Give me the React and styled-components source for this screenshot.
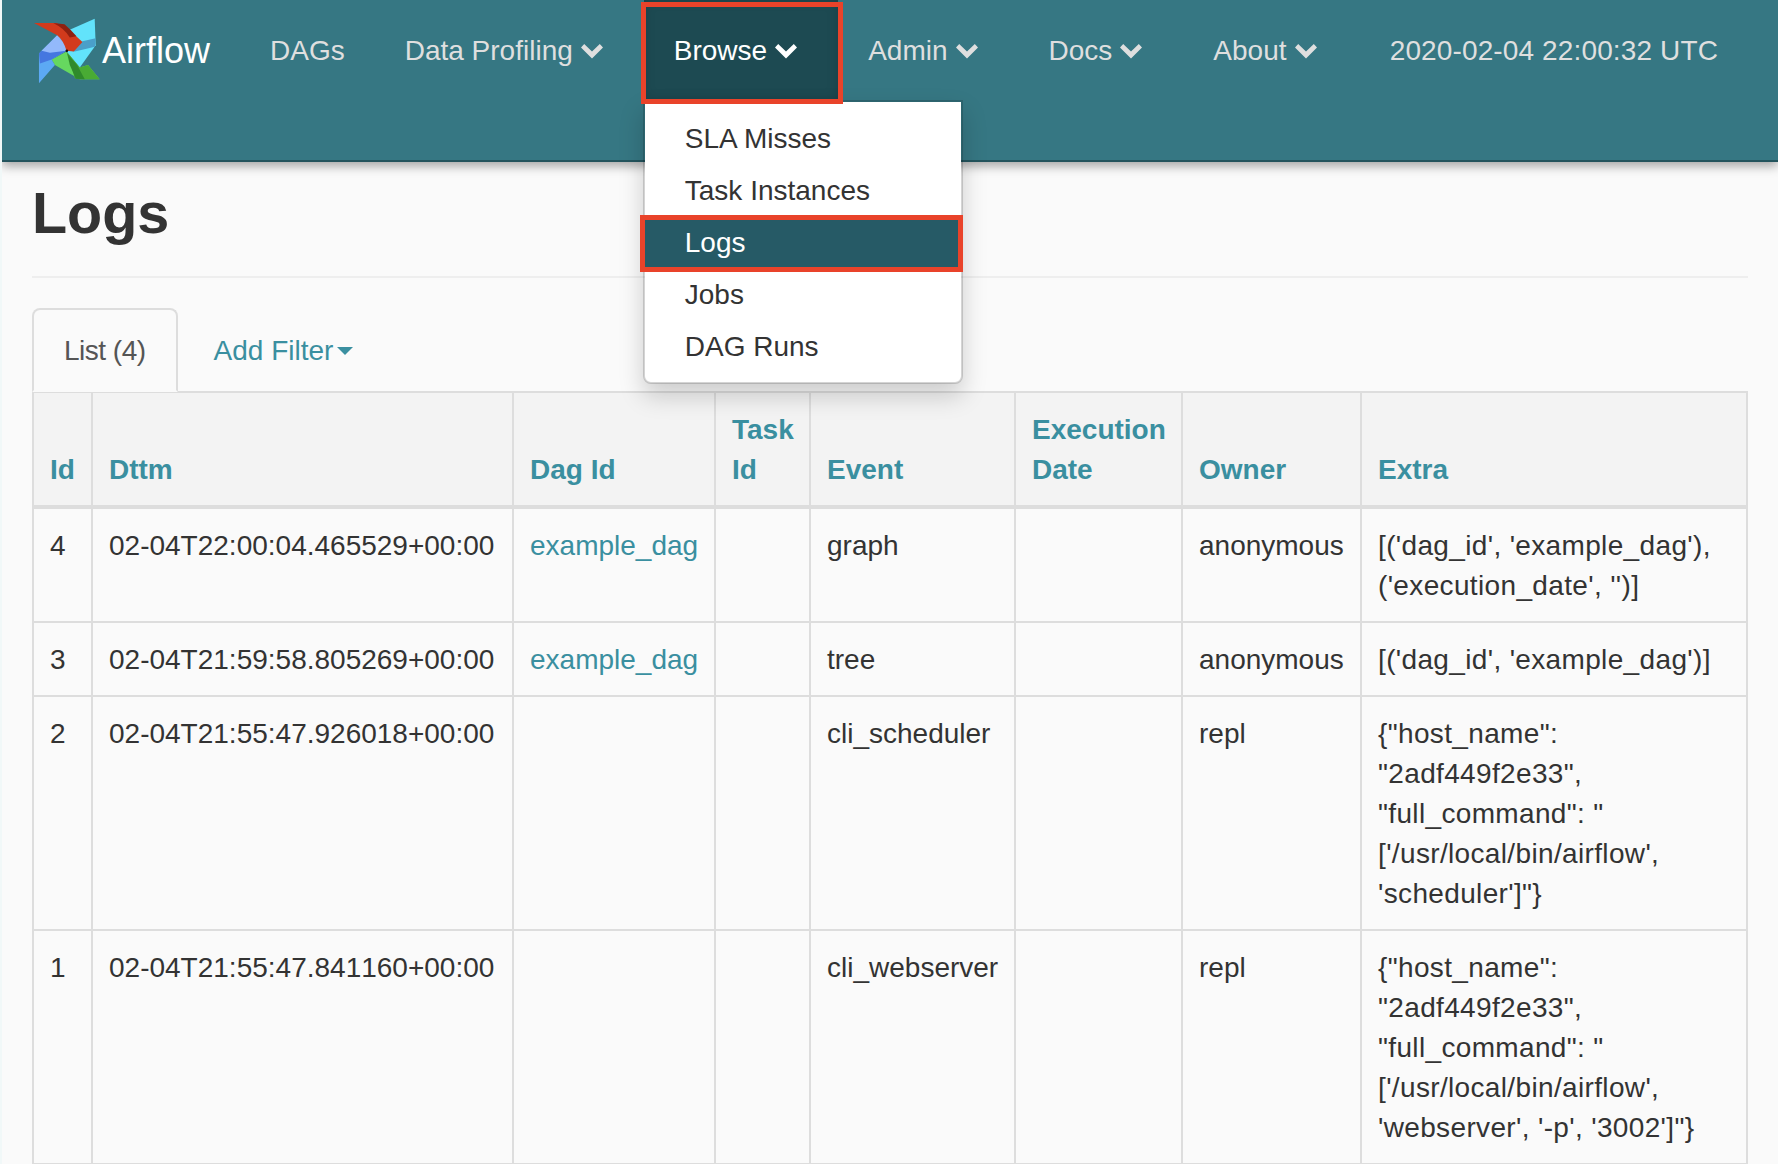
import React from 'react'
import styled, { createGlobalStyle } from 'styled-components'

const teal = '#3a8fa0'

const GlobalStyle = createGlobalStyle`
    html, body {
        margin: 0;
        height: 1164px;
        overflow: hidden;
        background: #fafafa;
    }
    body {
        font-family: "Liberation Sans", Arial, sans-serif;
        font-size: 28px;
        line-height: 40px;
        color: #333;
    }
`

const Shell = styled.div`
    height: 1164px;
    overflow: hidden;
    border-left: 2px solid #f1f8f8;
`

const Navbar = styled.nav`
    position: relative;
    z-index: 2;
    box-sizing: border-box;
    height: 162px;
    display: flex;
    align-items: flex-start;
    justify-content: space-between;
    padding-right: 60px;
    background: #367783;
    border-bottom: 2px solid #23545d;
    box-shadow: 0 4px 10px rgba(0, 0, 0, 0.35);
`

const Brand = styled.a`
    display: flex;
    align-items: flex-start;
    margin-left: 31px;
    width: 207px;
    font-size: 36px;
    line-height: 102px;
    color: #fff;
`

const Logo = styled.svg`
    width: 67px;
    height: 67px;
    margin: 17px 2px 0 0;
    flex: none;
`

const NavList = styled.div`
    flex: 1;
    display: flex;
    align-items: flex-start;
`

const NavItem = styled.div`
    position: relative;
    display: flex;
    align-items: center;
    gap: 8px;
    box-sizing: border-box;
    height: 100px;
    padding: ${p => (p.$caret ? '2px 41px 0 30px' : '2px 30px 0')};
    color: ${p => (p.$open ? '#fff' : '#dfdfdf')};
    background: ${p => (p.$open ? '#1d4a52' : 'transparent')};
    box-shadow: ${p => (p.$open ? 'inset 0 0 12px rgba(0, 0, 0, 0.15)' : 'none')};
    white-space: nowrap;
`

const Chevron = styled.svg`
    width: 22px;
    height: 16px;
    flex: none;
    fill: currentColor;
`

const Marker = styled.span`
    position: absolute;
    z-index: 3;
    box-sizing: border-box;
    top: ${p => p.$top};
    right: ${p => p.$right};
    bottom: ${p => p.$bottom};
    left: ${p => p.$left};
    border: 5px solid #e9432a;
    pointer-events: none;
`

const Clock = styled.div`
    height: 100px;
    padding-top: 2px;
    box-sizing: border-box;
    line-height: 98px;
    letter-spacing: 0.13px;
    color: #dfdfdf;
    white-space: nowrap;
`

const Menu = styled.div`
    position: absolute;
    top: 100px;
    left: -1px;
    box-sizing: border-box;
    width: 320px;
    padding: 10px 0;
    background: #fff;
    border: 2px solid rgba(0, 0, 0, 0.15);
    border-radius: 0 0 8px 8px;
    background-clip: padding-box;
    box-shadow: 0 12px 24px rgba(0, 0, 0, 0.18);
`

const MenuItem = styled.div`
    position: relative;
    height: 52px;
    line-height: 48px;
    padding: 3px 40px 0;
    box-sizing: border-box;
    color: ${p => (p.$active ? '#fff' : '#333')};
    background: ${p => (p.$active ? '#265a66' : 'transparent')};
`

const Content = styled.main`
    padding: 0 30px;
`

const Title = styled.h1`
    margin: 20px 0 30px;
    padding-bottom: 32px;
    border-bottom: 2px solid #eee;
    font-size: 57.5px;
    line-height: 62px;
    font-weight: bold;
    color: #333;
`

const Tabs = styled.div`
    display: flex;
    gap: 4px;
    height: 83px;
`

const Tab = styled.div`
    position: relative;
    z-index: 1;
    box-sizing: border-box;
    height: 84px;
    padding: 21px 30px 19px;
    border: 2px solid ${p => (p.$active ? '#ddd' : 'transparent')};
    border-bottom-color: ${p => (p.$active ? '#fafafa' : 'transparent')};
    border-radius: 8px 8px 0 0;
    color: ${p => (p.$active ? '#555' : teal)};
    letter-spacing: ${p => (p.$active ? '-0.5px' : '0')};
    display: flex;
    align-items: center;
    gap: 4px;
`

const Caret = styled.span`
    width: 0;
    height: 0;
    border-top: 8px solid ${teal};
    border-left: 8px solid transparent;
    border-right: 8px solid transparent;
`

const Grid = styled.table`
    width: 1714px;
    table-layout: fixed;
    border-collapse: collapse;
    border: 2px solid #ddd;
`

const Head = styled.th`
    padding: 17px 16px 15px;
    text-align: left;
    vertical-align: bottom;
    font-weight: bold;
    background: #f3f3f3;
    color: ${teal};
    border: 2px solid #ddd;
    border-bottom-width: 4px;
`

const Cell = styled.td`
    padding: 17px 16px 15px;
    vertical-align: top;
    border: 2px solid #ddd;
    color: ${p => (p.$link ? teal : '#333')};
    white-space: ${p => (p.$wrap ? 'normal' : 'nowrap')};
    letter-spacing: ${p => (p.$wrap ? '0.35px' : '0')};
    font-kerning: none;
`

const columns = [
    { title: 'Id', width: 59 },
    { title: 'Dttm', width: 421 },
    { title: 'Dag Id', width: 202 },
    { title: 'Task Id', width: 95 },
    { title: 'Event', width: 205 },
    { title: 'Execution Date', width: 167 },
    { title: 'Owner', width: 179 },
    { title: 'Extra', width: 386 },
]

const rows = [
    {
        id: 4,
        dttm: '02-04T22:00:04.465529+00:00',
        dag: 'example_dag',
        event: 'graph',
        owner: 'anonymous',
        extra: "[('dag_id', 'example_dag'), ('execution_date', '')]",
    },
    {
        id: 3,
        dttm: '02-04T21:59:58.805269+00:00',
        dag: 'example_dag',
        event: 'tree',
        owner: 'anonymous',
        extra: "[('dag_id', 'example_dag')]",
    },
    {
        id: 2,
        dttm: '02-04T21:55:47.926018+00:00',
        event: 'cli_scheduler',
        owner: 'repl',
        extra: `{"host_name": "2adf449f2e33", "full_command": "['/usr/local/bin/airflow', 'scheduler']"}`,
    },
    {
        id: 1,
        dttm: '02-04T21:55:47.841160+00:00',
        event: 'cli_webserver',
        owner: 'repl',
        extra: `{"host_name": "2adf449f2e33", "full_command": "['/usr/local/bin/airflow', 'webserver', '-p', '3002']"}`,
    },
]

const browseLinks = ['SLA Misses', 'Task Instances', 'Logs', 'Jobs', 'DAG Runs']

function Pinwheel() {
    return (
        <Logo viewBox="40 20 200 202">
            {/* cyan blade */}
            <path d="M225 25 L228 105 L180 172 L145 130 L140 122 L112 75 Z" fill="#62e3fb" />
            <path d="M188 93 L228 84 L226 110 L165 124 L150 122 Z" fill="#4a9fc9" />
            {/* green blade */}
            <path d="M140 124 L95 148 L105 165 L180 208 L240 208 L205 165 L180 172 L145 130 Z" fill="#66d85f" />
            <path d="M140 126 L150 150 L165 205 L180 208 L240 208 L205 165 L180 172 L145 130 Z" fill="#49ab34" />
            <path d="M142 130 L150 165 L168 206 L195 208 L172 165 Z" fill="#2f8a2b" />
            {/* blue blade */}
            <path d="M57 130 L65 122 L112 75 L137 105 L140 122 L95 148 L105 165 L57 220 Z" fill="#5ca9f4" />
            <path d="M57 130 L65 122 L140 122 L95 148 L60 160 Z" fill="#4577e0" />
            <path d="M65 122 L112 75 L137 105 L140 122 L90 128 Z" fill="#93b9fb" />
            {/* red blade */}
            <path d="M42 38 L110 38 Q150 58 188 95 L162 124 L140 122 Q132 92 112 75 Z" fill="#d23a1c" />
            <path d="M100 38 L134 42 Q155 60 170 78 L150 82 Q135 55 100 38 Z" fill="#8f2010" />
            <circle cx="141" cy="122" r="4" fill="#111" />
        </Logo>
    )
}

function DropdownLink({ children, open, menu }) {
    return (
        <NavItem $caret $open={open}>
            {children}
            <Chevron viewBox="0 0 22 16">
                <path d="M3.2 1 L11 8.6 L18.8 1 L22 4.4 L11 15.4 L0 4.4 Z" />
            </Chevron>
            {menu}
        </NavItem>
    )
}

function BrowseMenu() {
    return (
        <>
            <Marker $top="2px" $right="-5px" $bottom="-4px" $left="-3px" />
            <Menu>
                {browseLinks.map(name => (
                    <MenuItem key={name} $active={name === 'Logs'}>
                        {name}
                        {name === 'Logs' && <Marker $top="-1px" $right="-2px" $bottom="-4px" $left="-5px" />}
                    </MenuItem>
                ))}
            </Menu>
        </>
    )
}

export default function App() {
    return (
        <Shell>
            <GlobalStyle />
            <Navbar>
                <NavList>
                    <Brand>
                        <Pinwheel />
                        Airflow
                    </Brand>
                    <NavItem>DAGs</NavItem>
                    <DropdownLink>Data Profiling</DropdownLink>
                    <DropdownLink open menu={<BrowseMenu />}>Browse</DropdownLink>
                    <DropdownLink>Admin</DropdownLink>
                    <DropdownLink>Docs</DropdownLink>
                    <DropdownLink>About</DropdownLink>
                </NavList>
                <Clock>2020-02-04 22:00:32 UTC</Clock>
            </Navbar>
            <Content>
                <Title>Logs</Title>
                <Tabs>
                    <Tab $active>List (4)</Tab>
                    <Tab>Add Filter<Caret /></Tab>
                </Tabs>
                <Grid>
                    <colgroup>
                        {columns.map(col => <col key={col.title} width={col.width} />)}
                    </colgroup>
                    <thead>
                        <tr>
                            {columns.map(col => <Head key={col.title}>{col.title}</Head>)}
                        </tr>
                    </thead>
                    <tbody>
                        {rows.map(row => (
                            <tr key={row.id}>
                                <Cell>{row.id}</Cell>
                                <Cell>{row.dttm}</Cell>
                                <Cell $link>{row.dag}</Cell>
                                <Cell />
                                <Cell>{row.event}</Cell>
                                <Cell />
                                <Cell>{row.owner}</Cell>
                                <Cell $wrap>{row.extra}</Cell>
                            </tr>
                        ))}
                    </tbody>
                </Grid>
            </Content>
        </Shell>
    )
}
